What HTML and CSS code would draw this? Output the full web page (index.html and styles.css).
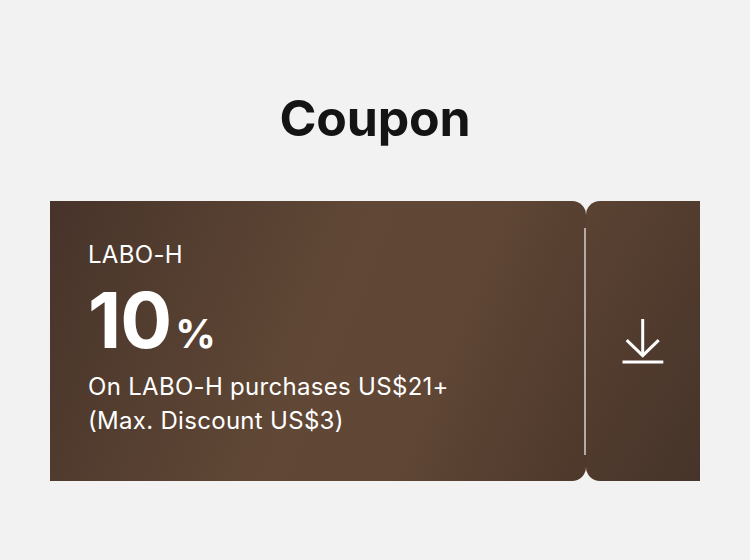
FILE: index.html
```html
<!DOCTYPE html>
<html lang="en">
<head>
<meta charset="utf-8">
<title>Coupon</title>
<link rel="stylesheet" href="styles.css">
</head>
<body>
<main class="page">
  <h1 class="title">Coupon</h1>
  <div class="coupon">
    <div class="coupon-main">
      <div class="brand">LABO-H</div>
      <div class="amount"><span class="num">10</span><span class="pct">%</span></div>
      <p class="desc">On LABO-H purchases US$21+<br>(Max. Discount US$3)</p>
    </div>
    <button class="coupon-stub" type="button" aria-label="Download coupon">
      <svg width="44" height="48" viewBox="0 0 44 48" fill="none" stroke="#fff" stroke-width="3">
        <path d="M21.7 2v36"/>
        <path d="M5.7 23.2 21.7 38.7 37.7 23.2" stroke-linejoin="miter"/>
        <path d="M1.5 45h40.8"/>
      </svg>
    </button>
  </div>
</main>
</body>
</html>
```

FILE: styles.css
```css
* { box-sizing: border-box; }
html, body { margin: 0; padding: 0; }
body {
  background: #f2f2f2;
  font-family: Inter, "Noto Sans", "Liberation Sans", sans-serif;
  width: 750px;
  height: 560px;
}
.page {
  padding: 88px 50px 0;
}
.title {
  margin: 0;
  text-align: center;
  font-size: 50px;
  line-height: 61px;
  font-weight: 700;
  color: #141414;
  letter-spacing: -0.2px;
}
.coupon {
  margin-top: 52px;
  display: flex;
  height: 280px;
}
.coupon-main {
  position: relative;
  width: 536px;
  padding: 39px 38px 0;
  border-radius: 0 14px 14px 0;
  background: linear-gradient(112deg, #47332a 0%, #543e30 25%, #614836 50%, #5f4635 70%, #4d382b 100%);
  color: #fff;
}
.coupon-main::after {
  content: "";
  position: absolute;
  right: 0;
  top: 27px;
  bottom: 26px;
  width: 2px;
  background: #b3aba4;
}
.brand {
  font-size: 24px;
  line-height: 30px;
  font-weight: 400;
  letter-spacing: 0.3px;
}
.amount {
  margin-top: 10px;
  height: 80px;
  line-height: 80px;
  font-weight: 700;
  white-space: nowrap;
}
.num {
  font-size: 77px;
  letter-spacing: -1px;
}
.pct {
  font-size: 40px;
  margin-left: 4px;
}
.desc {
  margin: 10px 0 0;
  font-size: 24px;
  line-height: 34px;
  font-weight: 400;
  letter-spacing: 0.3px;
}
.coupon-stub {
  flex: 1;
  display: flex;
  align-items: center;
  justify-content: center;
  padding: 0;
  border: 0;
  border-radius: 14px 0 0 14px;
  background: linear-gradient(120deg, #5b4333 0%, #4f3a2d 55%, #46342a 100%);
  cursor: pointer;
}
.coupon-stub svg {
  display: block;
}
```
